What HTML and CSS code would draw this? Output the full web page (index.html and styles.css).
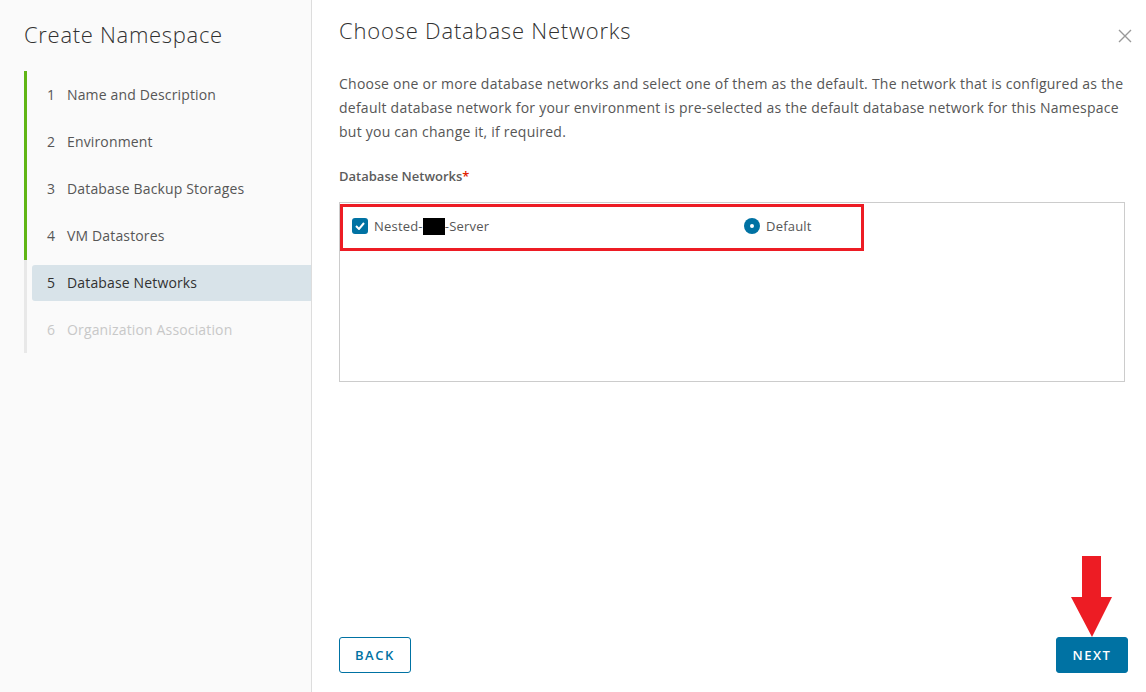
FILE: index.html
```html
<!DOCTYPE html>
<html lang="en">
<head>
  <meta charset="UTF-8">
  <title>Create Namespace</title>
  <link rel="stylesheet" href="styles.css">
</head>
<body>
  <div class="wizard">
    <div class="sidebar">
      <h1 class="wizard-title">Create Namespace</h1>
      <div class="steps">
        <div class="step done"><span class="num">1</span>Name and Description</div>
        <div class="step done"><span class="num">2</span>Environment</div>
        <div class="step done"><span class="num">3</span>Database Backup Storages</div>
        <div class="step done"><span class="num">4</span>VM Datastores</div>
        <div class="step active"><span class="num">5</span>Database Networks</div>
        <div class="step disabled"><span class="num">6</span>Organization Association</div>
      </div>
    </div>

    <div class="content">
      <div class="header">
        <h2>Choose Database Networks</h2>
        <button class="close" aria-label="Close">
          <svg width="14" height="14" viewBox="0 0 14 14"><path d="M1 1 L13 13 M13 1 L1 13" stroke="#999" stroke-width="1.4"/></svg>
        </button>
      </div>

      <p class="intro">
        Choose one or more database networks and select one of them as the default. The network that is configured as the<br>
        default database network for your environment is pre-selected as the default database network for this Namespace<br>
        but you can change it, if required.
      </p>

      <div class="field-label">Database Networks<span class="req">*</span></div>

      <div class="network-list">
        <div class="network-row">
          <label class="check">
            <span class="box">
              <svg width="10" height="8" viewBox="0 0 10 8"><path d="M1 4 L4 7 L9 1" fill="none" stroke="#fff" stroke-width="2"/></svg>
            </span>
            Nested-<span class="redacted"></span>-Server
          </label>
          <label class="radio"><span class="dot"></span>Default</label>
        </div>
        <div class="highlight"></div>
      </div>

      <div class="footer">
        <button class="btn btn-outline">BACK</button>
        <button class="btn btn-primary">NEXT</button>
        <svg class="arrow" width="42" height="82" viewBox="0 0 42 82">
          <polygon points="11,0 30,0 30,41 41,41 21,81 0,41 11,41" fill="#ed1c24"/>
        </svg>
      </div>
    </div>
  </div>
</body>
</html>
```

FILE: styles.css
```css
body {
  margin: 0;
  font-family: "Open Sans", "Liberation Sans", sans-serif;
  color: #565656;
  background: #fff;
}
.wizard {
  display: flex;
  height: 692px;
}
.sidebar {
  width: 311px;
  background: #fafafa;
  border-right: 1px solid #ddd;
  flex-shrink: 0;
}
.wizard-title {
  margin: 0;
  padding: 18px 0 0 24px;
  font-size: 22px;
  font-weight: 300;
  letter-spacing: 0.7px;
  color: #313131;
  line-height: 32px;
}
.steps {
  margin: 21px 0 0 24px;
  border-left: 3px solid #e8e8e8;
  padding: 6px 0 5px 5px;
}
.step {
  height: 36px;
  line-height: 36px;
  margin: 0 0 11px;
  padding-left: 15px;
  font-size: 14px;
  letter-spacing: 0.15px;
  color: #565656;
  position: relative;
}
.step:last-child {
  margin-bottom: 0;
}
.step.done::before {
  content: "";
  position: absolute;
  left: -8px;
  top: -6px;
  bottom: -6px;
  width: 3px;
  background: #60b515;
}
.step.active {
  background: #d8e3e9;
  color: #313131;
  border-radius: 3px 0 0 3px;
}
.step.disabled {
  color: #c8c8c8;
}
.num {
  display: inline-block;
  width: 20px;
}
.content {
  flex: 1;
  display: flex;
  flex-direction: column;
  padding: 0 21px 19px 27px;
  position: relative;
}
.header {
  display: flex;
  justify-content: space-between;
  align-items: flex-start;
}
.header h2 {
  margin: 14px 0 0;
  font-size: 22px;
  font-weight: 300;
  letter-spacing: 0.8px;
  color: #313131;
  line-height: 32px;
}
.close {
  background: none;
  border: 0;
  padding: 0;
  margin: 29px -7px 0 0;
  cursor: pointer;
}
.intro {
  margin: 26px 0 0;
  font-size: 14px;
  line-height: 24px;
  letter-spacing: 0.24px;
}
.field-label {
  margin-top: 23px;
  font-size: 13px;
  font-weight: 600;
  color: #5c5c5c;
}
.req {
  color: #e12200;
}
.network-list {
  margin-top: 17px;
  height: 178px;
  border: 1px solid #ccc;
  position: relative;
}
.network-row {
  display: flex;
  align-items: center;
  height: 46px;
  padding: 0 12px;
  font-size: 13px;
  letter-spacing: 0.2px;
}
.check {
  display: flex;
  align-items: center;
  width: 392px;
}
.box {
  width: 16px;
  height: 16px;
  background: #0072a3;
  border-radius: 3px;
  display: flex;
  align-items: center;
  justify-content: center;
  margin-right: 6px;
}
.redacted {
  display: inline-block;
  width: 22px;
  height: 17px;
  background: #000;
}
.radio {
  display: flex;
  align-items: center;
}
.dot {
  width: 4px;
  height: 4px;
  border: 4px solid #0072a3;
  background: #fff;
  border-radius: 50%;
  box-shadow: 0 0 0 2px #0072a3;
  margin: 0 8px 0 2px;
}
.highlight {
  position: absolute;
  left: 0;
  top: 1px;
  width: 518px;
  height: 41px;
  border: 3px solid #ed1c24;
}
.footer {
  margin-top: auto;
  display: flex;
  justify-content: space-between;
  position: relative;
  margin-right: -3px;
}
.btn {
  height: 36px;
  padding: 0 15px;
  font-family: inherit;
  font-size: 13px;
  font-weight: 600;
  letter-spacing: 1.5px;
  border-radius: 3px;
  cursor: pointer;
}
.btn-outline {
  background: #fff;
  color: #0072a3;
  border: 1px solid #0072a3;
}
.btn-primary {
  background: #0072a3;
  color: #fff;
  border: 1px solid #0072a3;
  width: 72px;
}
.arrow {
  position: absolute;
  right: 15px;
  bottom: 35px;
}
```
